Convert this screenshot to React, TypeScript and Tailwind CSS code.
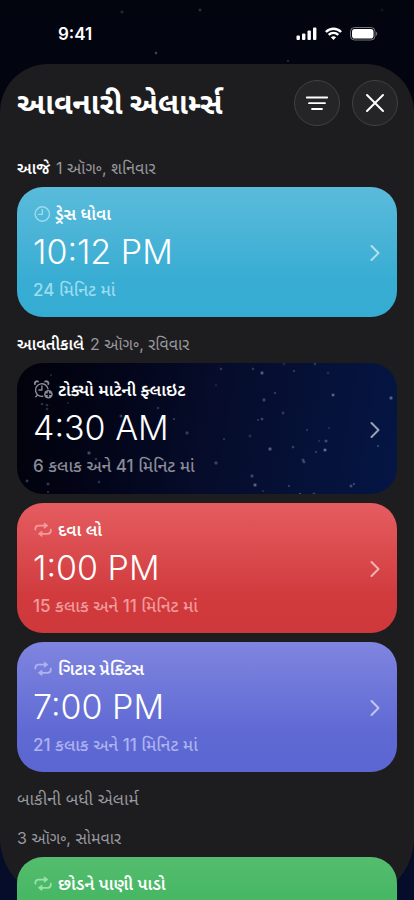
type IconName = "clock" | "alarm" | "repeat";

interface Alarm {
  id: string;
  icon: IconName;
  title: string;
  time?: string;
  remaining?: string;
  tone: string;
  muted: string;
  starry?: boolean;
}

const TODAY: Alarm[] = [
  {
    id: "laundry",
    icon: "clock",
    title: "ડ્રેસ ધોવા",
    time: "10:12 PM",
    remaining: "24 મિનિટ માં",
    tone: "from-[#5abbdb] via-[#38add3] to-[#35acd3]",
    muted: "text-[#9cdcf0]",
  },
];

const TOMORROW: Alarm[] = [
  {
    id: "flight",
    icon: "alarm",
    title: "ટોક્યો માટેની ફ્લાઇટ",
    time: "4:30 AM",
    remaining: "6 કલાક અને 41 મિનિટ માં",
    tone: "",
    muted: "text-[#8b8c98]",
    starry: true,
  },
  {
    id: "medicine",
    icon: "repeat",
    title: "દવા લો",
    time: "1:00 PM",
    remaining: "15 કલાક અને 11 મિનિટ માં",
    tone: "from-[#e55c60] via-[#d13b3e] to-[#ce383b]",
    muted: "text-[#f39a9c]",
  },
  {
    id: "guitar",
    icon: "repeat",
    title: "ગિટાર પ્રેક્ટિસ",
    time: "7:00 PM",
    remaining: "21 કલાક અને 11 મિનિટ માં",
    tone: "from-[#7f85df] via-[#5f69d3] to-[#5b66d2]",
    muted: "text-[#adb2f0]",
  },
];

const MONDAY: Alarm[] = [
  {
    id: "plants",
    icon: "repeat",
    title: "છોડને પાણી પાડો",
    tone: "from-[#54bd6e] via-[#34b058] to-[#31ae55]",
    muted: "text-[#9be0ab]",
  },
];

// x, y, radius, opacity
const CARD_STARS = [
  [34, 12, 1, 0.3], [25, 41, 1.6, 0.25], [30, 42, 1.6, 0.25], [30, 46, 1.6, 0.25],
  [51, 40, 1, 0.25], [104, 53, 1.8, 0.3], [141, 45, 1.5, 0.25], [157, 56, 1, 0.5],
  [170, 70, 2, 0.25], [207, 76, 1, 0.4], [72, 90, 2, 0.35], [79, 96, 1.6, 0.25],
  [10, 118, 1.8, 0.3], [31, 121, 1.8, 0.3], [31, 129, 1, 0.4], [82, 119, 1.6, 0.25],
  [199, 100, 2, 0.3], [204, 6, 1.4, 0.3], [236, 6, 1.4, 0.3], [245, 10, 1.9, 0.45],
  [277, 8, 1.3, 0.3], [267, 1, 1.4, 0.2], [298, 1, 1.5, 0.25], [311, 10, 1.8, 0.15],
  [199, 22, 1.6, 0.12], [258, 30, 1, 0.5], [247, 37, 1.9, 0.3], [316, 32, 1.8, 0.5],
  [374, 35, 2, 0.45], [266, 50, 1.7, 0.25], [241, 57, 1.1, 0.35], [245, 56, 1.5, 0.35],
  [290, 67, 1, 0.4], [312, 65, 1.2, 0.2], [233, 73, 1.7, 0.2], [253, 86, 2, 0.45],
  [276, 84, 1.5, 0.3], [302, 78, 1.3, 0.2], [309, 78, 1.8, 0.35], [308, 87, 1.8, 0.6],
  [299, 89, 1.3, 0.3], [286, 97, 1.8, 0.3], [287, 99, 1.8, 0.3], [361, 83, 1.2, 0.35],
  [235, 113, 2, 0.3], [238, 122, 2, 0.45], [272, 123, 1, 0.5], [246, 128, 1.3, 0.2],
  [334, 123, 1.8, 0.35], [337, 121, 1.3, 0.35], [283, 131, 1.2, 0.5], [297, 131, 1.7, 0.3],
];

const SKY_STARS = [
  [122, 12, 1.8, 0.2], [200, 10, 1.7, 0.25], [382, 10, 1.8, 0.1], [156, 53, 1.4, 0.45], [288, 61, 1.3, 0.25],
];

function Stars({ stars }: { stars: number[][] }) {
  return (
    <svg className="pointer-events-none absolute inset-0 h-full w-full" aria-hidden="true">
      {stars.map(([x, y, r, o], i) => (
        <g key={i} fill="#b4bee6">
          <circle cx={x} cy={y} r={r} opacity={o * 0.5} />
          <circle cx={x} cy={y} r={r * 0.6} opacity={o * 0.7} />
        </g>
      ))}
    </svg>
  );
}

function AlarmIcon({ name }: { name: IconName }) {
  if (name === "clock") {
    return (
      <svg width="17" height="18" viewBox="0 0 17 18" fill="none" stroke="currentColor" strokeWidth="1.4" strokeLinecap="round" strokeLinejoin="round" aria-hidden="true">
        <circle cx="8.3" cy="9" r="7.2" />
        <path d="M8.3 4.6V9.4H4.6" />
      </svg>
    );
  }
  if (name === "alarm") {
    return (
      <svg width="20" height="20" viewBox="0 0 20 20" fill="none" stroke="currentColor" strokeWidth="1.4" strokeLinecap="round" strokeLinejoin="round" aria-hidden="true">
        <path d="M8.8 16.3A6.3 6.3 0 1 1 14 8.9" />
        <path d="M7.9 5.9V10H4.9" />
        <path d="M0.9 4.1A2.2 2.2 0 0 1 4 1.5M11.2 1.5A2.2 2.2 0 0 1 14.3 4.1" strokeWidth="1.8" />
        <path d="M3.2 15.2L1.8 16.8" />
        <circle cx="14.4" cy="14.2" r="4.3" fill="currentColor" stroke="none" />
        <path d="M14.4 11.9V16.5M12.1 14.2H16.7" stroke="#050816" />
      </svg>
    );
  }
  return (
    <svg width="20" height="18" viewBox="0 0 20 18" fill="none" stroke="currentColor" strokeWidth="1.8" strokeLinecap="round" strokeLinejoin="round" aria-hidden="true">
      <path d="M1.4 8.6V7.6C1.4 5.8 2.6 4.6 4.6 4.6H10.6" />
      <path d="M16.8 8.6V9.8C16.8 11.6 15.6 12.8 13.6 12.8H7.6" />
      <path d="M10.6 2.2L13.8 4.6L10.6 7Z" fill="currentColor" strokeWidth="1" />
      <path d="M7.6 10.4L4.4 12.8L7.6 15.2Z" fill="currentColor" strokeWidth="1" />
    </svg>
  );
}

function AlarmCard({ alarm }: { alarm: Alarm }) {
  const background = alarm.starry
    ? "min-h-[131px] bg-linear-100 from-[#01020a] via-[#060c2a] to-[#041645]"
    : `min-h-[130px] bg-linear-to-b via-70% ${alarm.tone}`;

  return (
    <button
      type="button"
      className={`relative flex w-full shrink-0 items-center overflow-hidden rounded-[26px] px-4 pt-[15px] pb-[13px] text-left ${background}`}
    >
      {alarm.starry && <Stars stars={CARD_STARS} />}
      <span className="relative flex min-w-0 flex-1 flex-col self-start">
        <span className="flex h-6 items-center gap-1 pl-px">
          <span className={alarm.muted}>
            <AlarmIcon name={alarm.icon} />
          </span>
          <span className="text-[17px] leading-6 font-semibold whitespace-nowrap text-white">{alarm.title}</span>
        </span>
        {alarm.time && (
          <span className="text-[34px] leading-[52px] font-[350] whitespace-nowrap text-white">{alarm.time}</span>
        )}
        {alarm.remaining && (
          <span className={`h-[26px] text-[17px] leading-6 font-medium whitespace-nowrap ${alarm.muted}`}>
            {alarm.remaining}
          </span>
        )}
      </span>
      <svg width="12" height="18" viewBox="0 0 12 18" className="relative shrink-0 text-white/60" fill="none" stroke="currentColor" strokeWidth="2" strokeLinecap="round" strokeLinejoin="round" aria-hidden="true">
        <path d="M2.5 2L9.5 9L2.5 16" />
      </svg>
    </button>
  );
}

function StatusBar() {
  return (
    <div className="relative flex h-16 shrink-0 items-center justify-between pt-1 pr-9 pl-[58px] text-white">
      <span className="text-[17px] leading-6 font-semibold">9:41</span>
      <div className="flex items-center gap-2" aria-hidden="true">
        <svg width="21" height="14" viewBox="0 0 21 14" fill="currentColor">
          <rect x="0.5" y="8.5" width="3.4" height="4.5" rx="1" />
          <rect x="6" y="6.5" width="3.4" height="6.5" rx="1" />
          <rect x="11.5" y="3.5" width="3.4" height="9.5" rx="1" />
          <rect x="17" y="0.5" width="3.4" height="12.5" rx="1" />
        </svg>
        <svg width="17" height="14" viewBox="0 0 17 14" fill="none" stroke="currentColor" strokeWidth="2.4">
          <path d="M0.9 5C5.2 0.7 11.8 0.7 16.1 5" />
          <path d="M3.7 7.9C6.4 5.2 10.6 5.2 13.3 7.9" />
          <path d="M8.5 12.9L5.9 10.3C7.4 8.9 9.6 8.9 11.1 10.3Z" fill="currentColor" stroke="none" />
        </svg>
        <svg width="28" height="14" viewBox="0 0 28 14" fill="currentColor">
          <rect x="0.5" y="0.5" width="24.5" height="12.5" rx="4" fill="none" stroke="currentColor" opacity="0.45" />
          <rect x="2" y="2" width="21.5" height="9.5" rx="2.8" />
          <path d="M26.2 4.8C27.6 5.3 27.6 8.2 26.2 8.7Z" opacity="0.5" />
        </svg>
      </div>
    </div>
  );
}

function Header() {
  const round =
    "flex size-[46px] items-center justify-center rounded-full border border-[#414144] bg-[#252527] text-white";
  return (
    <header className="flex items-center justify-between px-4 pt-4">
      <h1 className="pl-px text-[30px] leading-10 font-bold whitespace-nowrap text-white">આવનારી એલાર્મ્સ</h1>
      <div className="flex gap-3">
        <button type="button" aria-label="ફિલ્ટર" className={round}>
          <svg width="24" height="24" viewBox="0 0 24 24" fill="none" stroke="currentColor" strokeWidth="1.8" strokeLinecap="round">
            <path d="M1.8 6.5H22.2M4 12.2H20M7 18H17" />
          </svg>
        </button>
        <button type="button" aria-label="બંધ કરો" className={round}>
          <svg width="24" height="24" viewBox="0 0 24 24" fill="none" stroke="currentColor" strokeWidth="2" strokeLinecap="round">
            <path d="M4 4L20 20M20 4L4 20" />
          </svg>
        </button>
      </div>
    </header>
  );
}

function DayHeading({ day, date }: { day?: string; date: string }) {
  return (
    <h2 className="flex h-6 items-baseline gap-[6px] text-[16px] leading-6 whitespace-nowrap">
      {day && <span className="font-semibold text-white">{day}</span>}
      <span className="text-[#98989e]">{date}</span>
    </h2>
  );
}

export default function App() {
  return (
    <div className="relative flex h-screen flex-col overflow-hidden bg-linear-to-b from-[#02040e] to-[#060d2a] font-['Inter','Noto_Sans_Gujarati','Noto_Sans',sans-serif]">
      <Stars stars={SKY_STARS} />
      <StatusBar />
      <main className="relative min-h-0 flex-1 rounded-t-[48px] rounded-b-[62px] bg-[#1d1d1f]">
        <Header />
        <div className="flex flex-col px-[17px] pt-[30px]">
          <DayHeading day="આજે" date="1 ઑગ૰, શનિવાર" />
          <section className="flex flex-col gap-[9px] pt-[7px]">
            {TODAY.map((alarm) => (
              <AlarmCard key={alarm.id} alarm={alarm} />
            ))}
          </section>
          <div className="pt-[15px]">
            <DayHeading day="આવતીકાલે" date="2 ઑગ૰, રવિવાર" />
          </div>
          <section className="flex flex-col gap-[9px] pt-[7px]">
            {TOMORROW.map((alarm) => (
              <AlarmCard key={alarm.id} alarm={alarm} />
            ))}
          </section>
          <p className="pt-[15px] text-[17px] leading-6 text-[#98989e]">બાકીની બધી એલાર્મ</p>
          <div className="pt-[15px]">
            <DayHeading date="3 ઑગ૰, સોમવાર" />
          </div>
          <section className="flex flex-col gap-[9px] pt-[7px]">
            {MONDAY.map((alarm) => (
              <AlarmCard key={alarm.id} alarm={alarm} />
            ))}
          </section>
        </div>
      </main>
    </div>
  );
}
